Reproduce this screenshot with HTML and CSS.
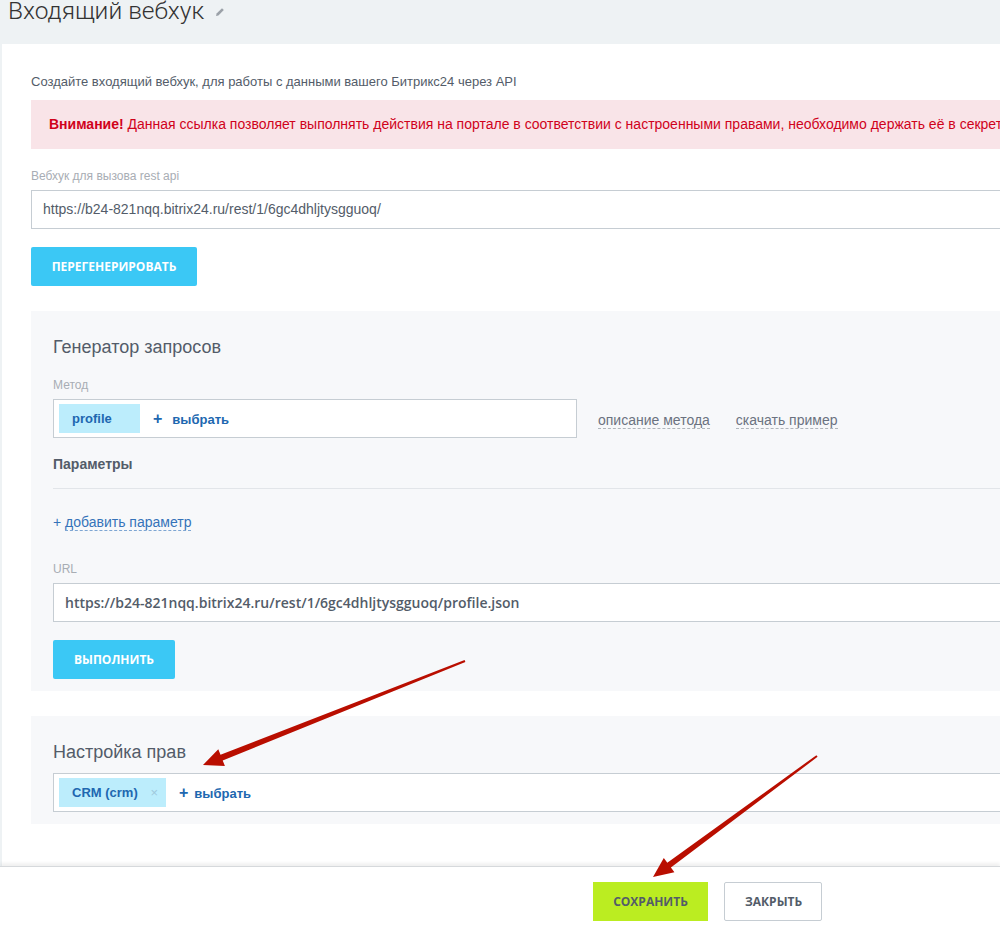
FILE: index.html
```html
<!DOCTYPE html>
<html lang="ru">
<head>
    <meta charset="UTF-8">
    <meta name="viewport" content="width=device-width, initial-scale=1.0">
    <title>Входящий вебхук</title>
    <link rel="stylesheet" href="styles.css">
</head>
<body>

<div class="page">
    <div class="page-header">
        <h1 class="page-title">Входящий вебхук</h1>
        <svg class="edit-icon" width="10" height="10" viewBox="0 0 10 10">
            <path d="M1 9 L1.6 6.6 L7 1.2 L8.8 3 L3.4 8.4 Z" fill="#9ba1a8"/>
        </svg>
    </div>

    <div class="card">
        <div class="intro">Создайте входящий вебхук, для работы с данными вашего Битрикс24 через API</div>

        <div class="alert">
            <b>Внимание!</b> Данная ссылка позволяет выполнять действия на портале в соответствии с настроенными правами, необходимо держать её в секрете
        </div>

        <div class="field-label">Вебхук для вызова rest api</div>
        <div class="input">https://b24-821nqq.bitrix24.ru/rest/1/6gc4dhljtysgguoq/</div>

        <button class="btn btn-blue btn-regen">Перегенерировать</button>

        <div class="section">
            <h2 class="section-title">Генератор запросов</h2>

            <div class="field-label">Метод</div>
            <div class="method-row">
                <div class="selector selector-method">
                    <span class="tag">profile</span>
                    <span class="add-link"><span class="plus">+</span>выбрать</span>
                </div>
                <span class="dash-link">описание метода</span>
                <span class="dash-link">скачать пример</span>
            </div>

            <div class="params-title">Параметры</div>
            <div class="params-line"></div>

            <div class="add-param">+ <span class="dash-link blue">добавить параметр</span></div>

            <div class="field-label">URL</div>
            <div class="input input-url">https://b24-821nqq.bitrix24.ru/rest/1/6gc4dhljtysgguoq/profile.json</div>

            <button class="btn btn-blue btn-run">Выполнить</button>
        </div>

        <div class="section section-rights">
            <h2 class="section-title">Настройка прав</h2>
            <div class="selector">
                <span class="tag tag-crm">CRM (crm) <span class="tag-remove">×</span></span>
                <span class="add-link"><span class="plus">+</span>выбрать</span>
            </div>
        </div>
    </div>

    <div class="footer">
        <button class="btn btn-save">Сохранить</button>
        <button class="btn btn-close">Закрыть</button>
    </div>

    <!-- red pointer arrows drawn on top of the form -->
    <svg class="arrows" width="1000" height="929" viewBox="0 0 1000 929">
        <polygon fill="#b90e00" points="464.6,660.1 220.5,754.8 218.3,749.2 203,765 224.9,766 222.7,760.4 465.4,661.9"/>
        <polygon fill="#b90e00" points="816.4,755.2 667.3,862.7 663.8,857.9 653,877 674.4,872.3 670.9,867.5 817.6,756.8"/>
    </svg>
</div>

</body>
</html>
```

FILE: styles.css
```css
body {
    margin: 0;
    background: #eef2f4;
    font-family: 'Liberation Sans', Arial, sans-serif;
    color: #535c69;
    overflow: hidden;
}

.page {
    position: relative;
    width: 1000px;
    height: 929px;
    overflow: hidden;
}

.page-header {
    height: 44px;
    display: flex;
    align-items: flex-start;
    padding-left: 8px;
}

.page-title {
    margin: -3px 0 0;
    font-family: 'Roboto', sans-serif;
    font-weight: 300;
    font-size: 24.5px;
    line-height: 28px;
    color: #333;
}

.edit-icon {
    margin: 7px 0 0 11px;
}

.card {
    margin-left: 2px;
    height: 822px;
    background: #fff;
    padding: 30px 0 0 29px;
    box-sizing: border-box;
}

.intro {
    font-size: 13px;
    line-height: 16px;
    margin-bottom: 10px;
}

.alert {
    height: 49px;
    line-height: 49px;
    padding-left: 18px;
    background: #f9e4e8;
    color: #d0021b;
    font-size: 14px;
    white-space: nowrap;
    overflow: hidden;
    margin-bottom: 19px;
}

.field-label {
    font-size: 12px;
    line-height: 16px;
    color: #a8adb4;
    margin-bottom: 6px;
}

.input {
    height: 39px;
    box-sizing: border-box;
    border: 1px solid #c6cdd3;
    border-right: none;
    background: #fff;
    padding-left: 11px;
    line-height: 37px;
    font-size: 14px;
    color: #535c69;
    white-space: nowrap;
}

.btn {
    display: inline-block;
    height: 39px;
    border: none;
    border-radius: 2px;
    padding: 0 20px;
    font-family: 'Open Sans', sans-serif;
    font-weight: bold;
    font-size: 12px;
    text-transform: uppercase;
}

.btn-blue {
    background: #3bc8f5;
    color: #fff;
}

.btn-regen {
    margin-top: 18px;
    width: 166px;
    display: block;
}

.section {
    margin-top: 25px;
    background: #f7f8fa;
    padding: 24px 0 12px 22px;
}

.section-title {
    margin: 0 0 18px;
    font-weight: normal;
    font-size: 18px;
    line-height: 24px;
    color: #535c69;
}

.method-row {
    display: flex;
    align-items: center;
}

.selector {
    height: 39px;
    box-sizing: border-box;
    border: 1px solid #c6cdd3;
    border-right: none;
    background: #fff;
    padding: 4px 5px;
    display: flex;
    align-items: center;
}

.selector-method {
    width: 524px;
    border-right: 1px solid #c6cdd3;
    margin-right: 21px;
}

.tag {
    height: 29px;
    line-height: 29px;
    background: #bcedfc;
    color: #2067b0;
    font-weight: bold;
    font-size: 13px;
    padding: 0 13px;
    width: 81px;
    box-sizing: border-box;
}

.tag-crm {
    width: 107px;
    padding-right: 8px;
    display: flex;
    justify-content: space-between;
}

.tag-remove {
    color: #9fc9dc;
    font-weight: normal;
    font-size: 13px;
}

.add-link {
    margin-left: 13px;
    color: #2067b0;
    font-weight: bold;
    font-size: 13px;
}

.plus {
    font-size: 16px;
    margin-right: 10px;
}

.selector .tag-crm + .add-link .plus {
    margin-right: 6px;
}

.dash-link {
    font-size: 14px;
    color: #6b7280;
    border-bottom: 1px dashed #b0b5bb;
    line-height: 16px;
    margin-top: 4px;
    margin-right: 26px;
}

.params-title {
    margin-top: 18px;
    font-weight: bold;
    font-size: 14px;
    line-height: 16px;
}

.params-line {
    height: 1px;
    background: #e2e5e9;
    margin: 16px 0 25px;
}

.add-param {
    font-size: 14px;
    line-height: 16px;
    color: #3573b9;
    margin-bottom: 31px;
}

.dash-link.blue {
    color: #3573b9;
    border-bottom-color: #7ea6d3;
    margin: 0;
}

.input-url {
    font-family: 'Open Sans', sans-serif;
    font-weight: 600;
}

.btn-run {
    margin-top: 18px;
    width: 122px;
    display: block;
}

.section-rights .section-title {
    margin-bottom: 9px;
}

.footer {
    height: 63px;
    background: #fff;
    border-top: 1px solid #d6d9dc;
    box-shadow: 0 -3px 3px rgba(0, 0, 0, 0.06);
    box-sizing: border-box;
    padding: 15px 0 0 593px;
    display: flex;
    gap: 16px;
    align-items: flex-start;
}

.btn-save {
    width: 115px;
    background: #bbed21;
    color: #535c69;
    border-radius: 0;
}

.btn-close {
    width: 98px;
    background: #fff;
    border: 1px solid #c6cdd3;
    color: #535c69;
}

.arrows {
    position: absolute;
    left: 0;
    top: 0;
    pointer-events: none;
}
```
